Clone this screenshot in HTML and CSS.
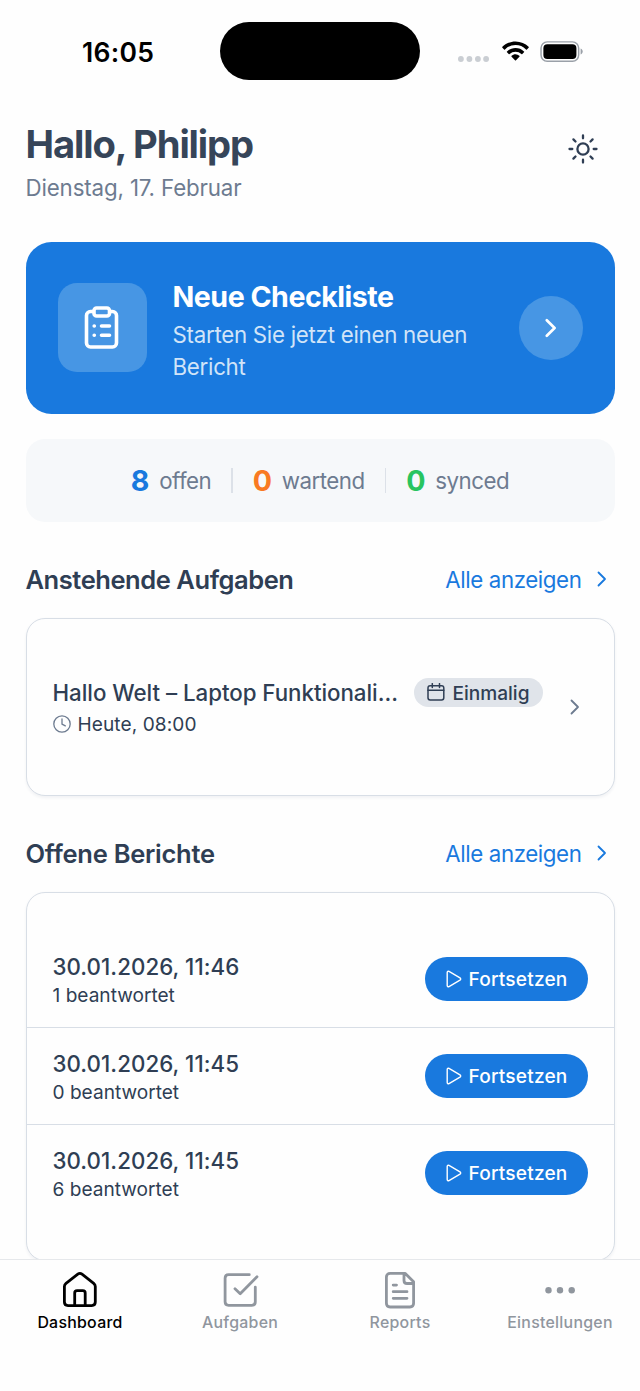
FILE: index.html
```html
<!DOCTYPE html>
<html lang="de">
<head>
<meta charset="utf-8">
<title>Dashboard</title>
<link rel="stylesheet" href="styles.css">
</head>
<body>
<svg class="defs" width="0" height="0" aria-hidden="true">
  <symbol id="chevron" viewBox="0 0 10 16"><path d="M1.500 1.500 8 8l-6.500 6.500"/></symbol>
  <symbol id="play" viewBox="0 0 16 18"><path d="M1.200 2.500v13c0 1 .9 1.500 1.800 1.100l11-6.500c.9-.6.9-1.600 0-2.200L3 1.400c-.9-.4-1.800.1-1.800 1.100Z"/></symbol>
</svg>
<div class="screen">
  <div class="status">
    <div class="time">16:05</div>
    <div class="island"></div>
    <div class="indicators">
      <svg class="signal" viewBox="0 0 31 6"><circle cx="2.900" cy="3" r="2.900"/><circle cx="11.400" cy="3" r="2.900"/><circle cx="19.900" cy="3" r="2.900"/><circle cx="28.100" cy="3" r="2.900"/></svg>
      <svg class="wifi" viewBox="0 0 27 20"><path d="M13.500 .5C8.300 .5 3.700 2.600.4 5.800a.6.6 0 0 0 0 .9l1.700 1.700c.3.300.6.300.9 0a15 15 0 0 1 21 0c.3.300.6.300.9 0l1.700-1.700a.6.6 0 0 0 0-.9C23.300 2.600 18.700.5 13.500.5Z"/><path d="M13.500 7c-3.300 0-6.300 1.300-8.500 3.400a.6.6 0 0 0 0 .9l1.700 1.700c.3.300.6.300.9 0a8.600 8.600 0 0 1 11.800 0c.3.300.6.300.9 0l1.700-1.700a.6.6 0 0 0 0-.9A12.300 12.300 0 0 0 13.500 7Z"/><path d="M13.500 13.300c-1.500 0-2.900.6-3.900 1.500a.6.6 0 0 0 0 .9l3.400 3.500c.3.300.7.300 1 0l3.400-3.500a.6.6 0 0 0 0-.9 6 6 0 0 0-3.900-1.500Z"/></svg>
      <svg class="battery" viewBox="0 0 44 22"><rect x=".8" y=".9" width="38.500" height="19.800" rx="6.300" fill="none" stroke="#9aa0a8" stroke-width="1.500"/><rect x="3.200" y="3.200" width="33.800" height="15.200" rx="4"/><path d="M41.300 7.800c1.400.6 2.100 1.700 2.100 3s-.7 2.400-2.100 3Z" fill="#9aa0a8"/></svg>
    </div>
  </div>

  <main class="content">
    <header class="hello">
      <div>
        <h1 class="greeting"><span>Hallo, Philipp</span></h1>
        <p class="date"><span>Dienstag, 17. Februar</span></p>
      </div>
      <svg class="sun" viewBox="0 0 30 30"><circle cx="15" cy="15" r="5.600"/><path d="M15 1.500v2.800M15 25.700v2.800M1.500 15h2.800M25.700 15h2.800M5.400 5.400l2.100 2.100M22.500 22.500l2.100 2.100M24.600 5.400l-2.100 2.100M7.500 22.500l-2.100 2.100"/></svg>
    </header>

    <section class="hero">
      <div class="hero-icon">
        <svg viewBox="0 0 36 44"><rect x="2.500" y="5.500" width="30" height="35.500" rx="4"/><rect class="clip" x="10" y="2" width="15.500" height="8" rx="2.600"/><path d="M10.200 20h.1M17.500 20h8M10.200 29.200h.1M17.500 29.200h8"/></svg>
      </div>
      <div class="hero-text">
        <h2 class="hero-title">Neue Checkliste</h2>
        <p class="hero-sub">Starten Sie jetzt einen neuen<br>Bericht</p>
      </div>
      <div class="hero-go"><svg class="chev"><use href="#chevron"/></svg></div>
    </section>

    <section class="stats">
      <div class="stat"><b class="blue">8</b><span>offen</span></div>
      <i class="rule"></i>
      <div class="stat"><b class="orange">0</b><span>wartend</span></div>
      <i class="rule"></i>
      <div class="stat"><b class="green">0</b><span>synced</span></div>
    </section>

    <div class="section-head">
      <h3 class="tasks-title">Anstehende Aufgaben</h3>
      <a class="more"><span>Alle anzeigen</span><svg class="chev"><use href="#chevron"/></svg></a>
    </div>
    <section class="card task">
      <div class="task-main">
        <div class="task-line">
          <span class="task-name">Hallo Welt – Laptop Funktionali...</span>
          <span class="badge"><svg viewBox="0 0 18 18"><rect x="1" y="2.700" width="15.800" height="14.300" rx="2.200"/><path d="M1 7.300h15.800M5.300 .6v4M12.500 .6v4"/></svg><span>Einmalig</span></span>
        </div>
        <div class="due"><svg viewBox="0 0 18 18"><circle cx="9" cy="9" r="8.200"/><path d="M9 4v5.200l3.300 1.700"/></svg><span>Heute, 08:00</span></div>
      </div>
      <svg class="chev"><use href="#chevron"/></svg>
    </section>

    <div class="section-head reports-head">
      <h3 class="reports-title">Offene Berichte</h3>
      <a class="more"><span>Alle anzeigen</span><svg class="chev"><use href="#chevron"/></svg></a>
    </div>
    <section class="card reports">
      <div class="report">
        <div><div class="stamp">30.01.2026, 11:46</div><div class="answered">1 beantwortet</div></div>
        <div class="resume"><svg><use href="#play"/></svg><span>Fortsetzen</span></div>
      </div>
      <div class="report">
        <div><div class="stamp">30.01.2026, 11:45</div><div class="answered">0 beantwortet</div></div>
        <div class="resume"><svg><use href="#play"/></svg><span>Fortsetzen</span></div>
      </div>
      <div class="report">
        <div><div class="stamp">30.01.2026, 11:45</div><div class="answered">6 beantwortet</div></div>
        <div class="resume"><svg><use href="#play"/></svg><span>Fortsetzen</span></div>
      </div>
    </section>
  </main>

  <nav class="tabs">
    <div class="tab active"><svg viewBox="0 0 38 38"><path d="M3.400 15.500c0-1.400.5-2.300 1.600-3.200L16.800 3.200c1.300-1 2.900-1 4.200 0l11.700 9.100c1.100.9 1.600 1.800 1.600 3.200v15.600c0 2.200-1.400 3.500-3.600 3.500H7c-2.200 0-3.600-1.300-3.600-3.500Z"/><path d="M13.700 34.500V22c0-1.500.9-2.300 2.400-2.300h5.700c1.500 0 2.400.8 2.400 2.300v12.500"/></svg><span>Dashboard</span></div>
    <div class="tab"><svg viewBox="0 0 38 38"><path d="M28.300 3.700H7.600c-2.200 0-3.500 1.300-3.500 3.500v23.600c0 2.200 1.300 3.500 3.500 3.500h23.200c2.200 0 3.500-1.300 3.500-3.500V16.200M14 17.800l5.200 4.900L36 5.700"/></svg><span>Aufgaben</span></div>
    <div class="tab"><svg viewBox="0 0 38 38"><path d="M24.300 2.400H9.100c-2.300 0-3.700 1.500-3.700 3.700v26.200c0 2.300 1.400 3.700 3.700 3.700h19.800c2.300 0 3.700-1.400 3.700-3.700V10.700ZM23 2.800v6.600c0 2 1.100 3.100 3.100 3.100h6.200M12.200 14.100h3.300M12.200 20.700H26M12.200 27.300H26"/></svg><span>Reports</span></div>
    <div class="tab"><svg class="dots" viewBox="0 0 38 38"><circle cx="7.500" cy="19.300" r="3.200"/><circle cx="19" cy="19.300" r="3.200"/><circle cx="30.700" cy="19.300" r="3.200"/></svg><span>Einstellungen</span></div>
  </nav>
</div>
</body>
</html>
```

FILE: styles.css
```css
* { box-sizing: border-box; margin: 0; padding: 0; }
body { background: #fff; font-family: Inter, "Liberation Sans", sans-serif; color: #2f3e54; }
svg { display: block; flex: none; fill: none; stroke: currentColor; stroke-linecap: round; stroke-linejoin: round; }
.defs { position: absolute; }
.screen { width: 640px; height: 1391px; overflow: hidden; display: flex; flex-direction: column; background: #fefefe; white-space: nowrap; }

.status { height: 104px; flex: none; display: grid; grid-template-columns: 220px 200px 220px; align-items: start; color: #000; }
.time { padding: 36px 0 0 82px; font-size: 26.500px; line-height: 32px; font-weight: 600; letter-spacing: .3px; }
.island { margin-top: 22px; height: 58px; border-radius: 30px; background: #000; }
.indicators { display: flex; padding: 41px 0 0 38px; }
.indicators svg { stroke: none; fill: #000; }
.indicators .signal { width: 31px; height: 6px; margin: 14.600px 12.500px 0 0; fill: #caced3; }
.wifi { width: 27px; height: 20px; margin-right: 11.500px; }
.battery { width: 43.500px; height: 21.500px; }

.content { flex: 1; min-height: 0; overflow: hidden; padding: 0 25.500px; }
.hello { display: flex; justify-content: space-between; height: 138px; padding: 17px 17px 0 0; }
.greeting { font-size: 38.200px; line-height: 46px; font-weight: 700; color: #364559; letter-spacing: -1.120px; }
.date { margin-top: 5px; font-size: 22.300px; line-height: 32px; color: #6d7b90; letter-spacing: -.130px; }
.sun { width: 30px; height: 30px; margin-top: 13.300px; stroke-width: 2.300; }

.hero { height: 171.500px; border-radius: 25.500px; background: #1979de; display: flex; align-items: center; padding: 0 32px; color: #fff; }
.hero-icon { width: 89px; height: 89px; border-radius: 19px; background: #4796e4; display: flex; align-items: center; justify-content: center; }
.hero-icon svg { width: 36px; height: 44px; stroke-width: 3.600; }
.clip { fill: #4796e4; }
.hero-text { flex: 1; padding: 6px 0 0 26px; }
.hero-title { font-size: 28.600px; line-height: 38px; font-weight: 700; letter-spacing: -.500px; }
.hero-sub { margin-top: 3px; font-size: 22.300px; line-height: 32px; color: #d1e4f8; letter-spacing: -.270px; }
.hero-go { width: 64px; height: 64px; border-radius: 50%; background: #4796e4; display: flex; align-items: center; justify-content: center; }
.hero-go .chev { width: 12px; height: 20px; stroke-width: 2.200; }

.stats { margin-top: 25.500px; height: 83px; border-radius: 19px; background: #f6f8fa; display: flex; align-items: center; justify-content: center; gap: 20px; }
.stat { display: flex; align-items: center; gap: 10.500px; font-size: 22.300px; line-height: 32px; color: #6d7b90; }
.stat span { letter-spacing: -.500px; }
.stat b { font-size: 28.600px; font-weight: 700; letter-spacing: -.800px; }
.blue { color: #1979de; }
.orange { color: #f97a22; }
.green { color: #28c45f; }
.rule { width: 1.600px; height: 25.500px; background: #dce1e8; }

.section-head { margin-top: 37px; height: 40px; display: flex; align-items: center; justify-content: space-between; padding-right: 8px; }
.section-head h3 { font-size: 25.500px; font-weight: 600; }
.section-head .tasks-title { letter-spacing: -.440px; }
.section-head .reports-title { letter-spacing: -.260px; }
.more { display: flex; align-items: center; gap: 15px; font-size: 22.300px; color: #1979de; letter-spacing: -.400px; }
.more .chev, .task > .chev { width: 10px; height: 16px; stroke-width: 1.800; }
.card { border: 1.500px solid #d8dee6; border-radius: 19px; background: #fefefe; box-shadow: 0 1.500px 3px rgba(30, 50, 80, .06); }
.task { margin-top: 19px; height: 178px; display: flex; align-items: center; justify-content: space-between; padding: 0 34px 0 26px; }
.task-main { width: 490px; padding-top: 2px; }
.task-line { display: flex; align-items: center; justify-content: space-between; height: 32px; }
.task-name { font-size: 22.300px; font-weight: 500; letter-spacing: -.030px; }
.badge { height: 29px; border-radius: 15px; background: #e0e4ea; padding: 0 13px; display: flex; align-items: center; gap: 7px; font-size: 19.100px; font-weight: 500; }
.badge svg { width: 18px; height: 18px; stroke-width: 1.500; }
.badge span { padding-top: 1px; }
.due { display: flex; align-items: center; height: 32px; gap: 7px; font-size: 19.100px; letter-spacing: .080px; }
.due svg { width: 18px; height: 18px; stroke-width: 1.300; color: #6d7b90; }
.task > .chev { color: #6d7b90; }

.reports { margin-top: 18.500px; height: 369px; padding-top: 37px; }
.report { height: 97px; display: flex; align-items: center; justify-content: space-between; padding: 1px 25.500px 0 26px; border-top: 1.500px solid #d8dee6; }
.report:first-child { border-top-color: transparent; }
.stamp { font-size: 22.300px; line-height: 32px; font-weight: 500; letter-spacing: .050px; }
.answered { font-size: 19.100px; line-height: 25px; }
.resume { width: 163px; height: 44.500px; border-radius: 23px; background: #1979de; color: #fff; display: flex; align-items: center; justify-content: center; gap: 7px; font-size: 19.100px; font-weight: 500; letter-spacing: .180px; }
.resume svg { width: 16px; height: 18px; stroke-width: 1.400; }

.tabs { height: 132px; flex: none; border-top: 1px solid #e6e8eb; display: grid; grid-template-columns: repeat(4, 1fr); background: #fefefe; }
.tab { display: flex; flex-direction: column; align-items: center; padding-top: 11px; color: #90969e; font-size: 15.900px; line-height: 20px; font-weight: 500; letter-spacing: .260px; }
.tab svg { width: 38px; height: 38px; margin-bottom: 4px; stroke-width: 2.800; }
.tab .dots { fill: currentColor; stroke: none; }
.active { color: #000; }
```
